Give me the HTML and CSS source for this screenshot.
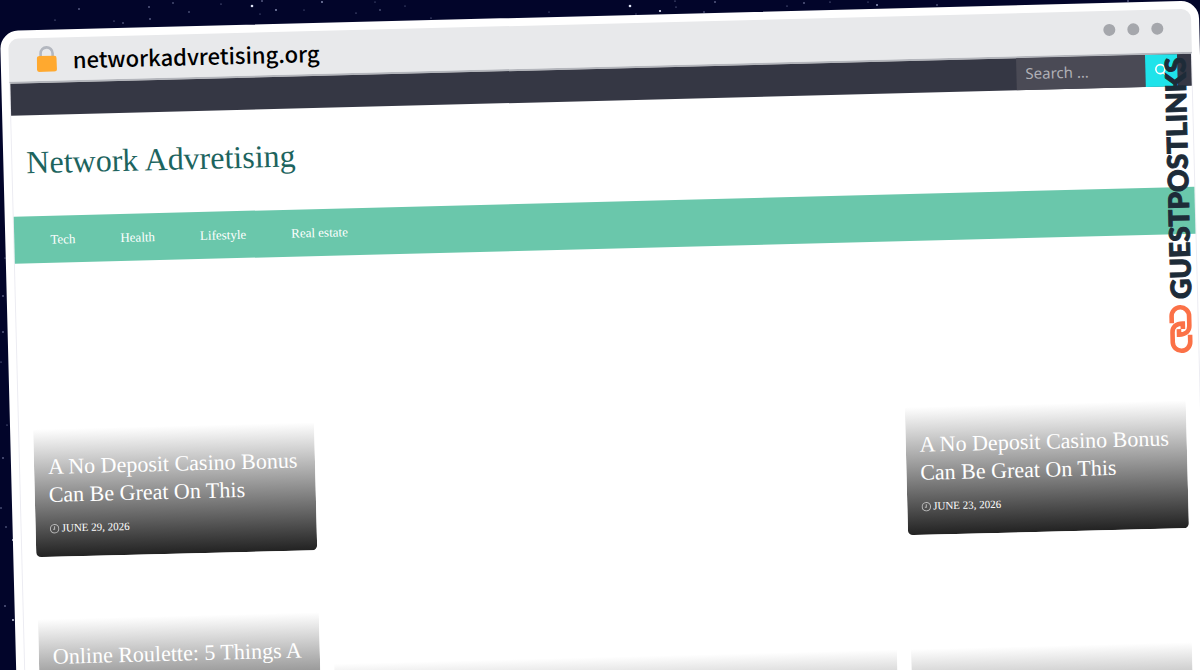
FILE: index.html
```html
<!DOCTYPE html>
<html lang="en">
<head>
<meta charset="utf-8">
<title>Network Advretising</title>
<link rel="stylesheet" href="styles.css">
</head>
<body>
<svg class="stars" aria-hidden="true">
  <g fill="#8f97bd">
    <circle cx="79" cy="9" r=".8"/><circle cx="149" cy="7" r=".8"/><circle cx="55" cy="20" r=".6"/><circle cx="123" cy="23" r=".7"/><circle cx="150" cy="19" r=".8"/><circle cx="114" cy="21" r=".6"/><circle cx="173" cy="3" r=".7"/><circle cx="189" cy="12" r=".7"/><circle cx="221" cy="4" r=".6"/><circle cx="262" cy="1" r=".8"/><circle cx="276" cy="10" r=".9"/><circle cx="260" cy="14" r=".5"/><circle cx="304" cy="10" r=".5"/><circle cx="322" cy="2" r=".9"/><circle cx="356" cy="13" r=".6"/><circle cx="380" cy="10" r=".7"/><circle cx="375" cy="2" r=".5"/><circle cx="405" cy="6" r=".5"/><circle cx="431" cy="18" r=".6"/><circle cx="549" cy="12" r=".5"/><circle cx="636" cy="14" r=".6"/><circle cx="675" cy="1" r=".6"/><circle cx="676" cy="7" r=".6"/><circle cx="715" cy="2" r=".8"/><circle cx="704" cy="12" r=".7"/><circle cx="787" cy="6" r=".6"/><circle cx="804" cy="3" r=".8"/><circle cx="830" cy="2" r=".6"/><circle cx="868" cy="2" r=".5"/><circle cx="877" cy="5" r="1"/><circle cx="937" cy="5" r=".7"/><circle cx="1128" cy="1" r=".8"/>
    <circle cx="5" cy="258" r=".6"/><circle cx="3" cy="296" r=".8"/><circle cx="3" cy="332" r=".8"/><circle cx="1" cy="362" r=".6"/><circle cx="7" cy="425" r=".6"/><circle cx="3" cy="458" r=".8"/><circle cx="1" cy="508" r=".7"/><circle cx="6" cy="527" r=".7"/><circle cx="5" cy="606" r=".8"/>
  </g>
  <g fill="#dfe3f5">
    <circle cx="252" cy="6" r="1.3"/><circle cx="630" cy="6" r="1.3"/><circle cx="660" cy="11" r="1.1"/><circle cx="13" cy="540" r=".9"/><circle cx="13" cy="620" r=".9"/>
  </g>
</svg>
<div class="window">
  <div class="titlebar">
    <svg class="lock" viewBox="0 0 20 26" aria-hidden="true"><path d="M4 13V7.500a6 6 0 0 1 12 0V13" fill="none" stroke="#b3b7bf" stroke-width="2.600"/><rect y="10" width="20" height="16" rx="2.500" fill="#ffa92f"/></svg>
    <span class="address">networkadvretising.org</span>
    <span class="dots"><i></i><i></i><i></i></span>
  </div>
  <div class="page">
    <form class="topbar">
      <input class="search" type="search" placeholder="Search …" aria-label="Search">
      <button class="go" type="button" aria-label="Search"><svg viewBox="0 0 16 16" width="16" height="16"><circle cx="7" cy="6.500" r="4.500" fill="none" stroke="#fff" stroke-width="1.600"/><path d="M10 10l4.500 4.500" stroke="#fff" stroke-width="1.800"/></svg></button>
    </form>
    <header class="brand"><h1>Network Advretising</h1></header>
    <nav class="nav"><a href="#">Tech</a><a href="#">Health</a><a href="#">Lifestyle</a><a href="#">Real estate</a></nav>
    <main class="grid">
      <div class="column">
        <article class="card"><div class="caption"><h2>A No Deposit Casino Bonus Can Be Great On This</h2><p><svg class="clock" viewBox="0 0 10 10"><circle cx="5" cy="5" r="4.200"/><path d="M5 2.500V5.500H3.500"/></svg>JUNE 29, 2026</p></div></article>
        <article class="card short"><div class="caption"><h2>Online Roulette: 5 Things A</h2></div></article>
      </div>
      <article class="card"><div class="caption"></div></article>
      <div class="column">
        <article class="card"><div class="caption"><h2>A No Deposit Casino Bonus Can Be Great On This</h2><p><svg class="clock" viewBox="0 0 10 10"><circle cx="5" cy="5" r="4.200"/><path d="M5 2.500V5.500H3.500"/></svg>JUNE 23, 2026</p></div></article>
        <article class="card"><div class="caption"></div></article>
      </div>
    </main>
  </div>
  <div class="badge">
    <svg viewBox="0 0 24 48" width="24" height="48" fill="none" stroke="#fb7147" stroke-width="4.600" aria-hidden="true"><path d="M3 18V11a8.700 8.700 0 0 1 17.500 0V21c0 5-3.500 8.500-10.500 8.500V24"/><path d="M21 30V37a8.700 8.700 0 0 1-17.500 0V27c0-5 3.500-8.500 10.500-8.500V24"/></svg>
    <span>GUESTPOSTLINKS</span>
  </div>
</div>
</body>
</html>
```
FILE: styles.css
```css
* { box-sizing: border-box; }
body {
  margin: 0;
  height: 100vh;
  overflow: hidden;
  background: #02052a;
  font-family: "Liberation Serif", serif;
}
.stars { position: absolute; width: 100%; height: 100%; }
.window {
  position: relative;
  width: calc(100% - 1px);
  margin-top: 31px;
  border: 8px solid #fff;
  border-radius: 18px;
  background: #fff;
  transform: rotate(-1.45deg);
  transform-origin: 0 0;
}
.titlebar {
  display: flex;
  align-items: center;
  height: 45px;
  padding: 0 28px 2px;
  border-bottom: 2px solid #b4b6bc;
  border-radius: 10px 10px 0 0;
  background: #e8e9eb;
}
.lock { width: 20px; height: 26px; }
.address {
  margin-left: 16px;
  font: 500 22px/40px "Noto Sans CJK SC", sans-serif;
  color: #000;
}
.dots { display: flex; gap: 12px; margin-left: auto; padding-bottom: 4px; }
.dots i { width: 12px; height: 12px; border-radius: 50%; background: #a5a7ac; }
.page { border: solid #ececf2; border-width: 0 1px; }
.topbar {
  display: flex;
  justify-content: flex-end;
  height: 32px;
  padding-right: 14px;
  background: #353744;
}
.search {
  width: 129px;
  padding: 0 9px 2px;
  border: 0;
  background: #4a4a55;
  font: 15px "Noto Sans", sans-serif;
  color: #fff;
}
.search::placeholder { color: #b0b0b5; }
.go {
  display: grid;
  place-items: center;
  width: 32px;
  padding: 0;
  border: 0;
  background: #1fe3ea;
}
.brand { padding: 20px 14px 27px; }
.brand h1 { margin: 0; font-size: 32px; font-weight: 400; line-height: 54px; color: #1d645e; }
.nav {
  display: flex;
  gap: 1px;
  padding: 0 14px;
  background: #6ac7ab;
  line-height: 47px;
}
.nav a { padding: 0 22px; font-size: 13px; color: #fff; text-decoration: none; }
.grid {
  display: grid;
  grid-template-columns: 1fr 2fr 1fr;
  gap: 14px;
  padding: 68px 14px 14px;
}
.column { display: flex; flex-direction: column; gap: 16px; }
.card {
  display: flex;
  align-items: flex-end;
  min-height: 226px;
  border-radius: 5px;
  overflow: hidden;
}
.card.short { min-height: 174px; }
.caption {
  width: 100%;
  min-height: 128px;
  padding: 24px 14px 20px;
  background: linear-gradient(transparent, #222);
  color: #fff;
}
.caption h2 { margin: 0 0 11px; font-size: 22px; font-weight: 400; line-height: 28px; }
.caption p { display: flex; align-items: center; gap: 2px; margin: 0; font-size: 11px; line-height: 17px; }
.clock { width: 10px; height: 10px; fill: none; stroke: #bbb; stroke-width: 1; }
.badge {
  position: absolute;
  top: 48px;
  right: 4px;
  display: flex;
  gap: 6px;
  align-items: center;
  writing-mode: vertical-rl;
  transform: rotate(180deg);
  font: 900 28px/28px Lato, sans-serif;
  color: #1d2b38;
  -webkit-text-stroke: 1px #1d2b38;
}
```
